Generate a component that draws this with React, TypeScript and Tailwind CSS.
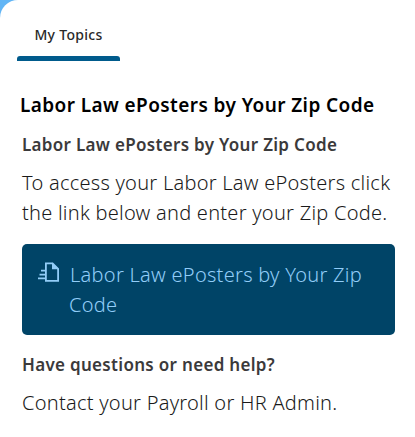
import { ReactNode } from 'react';

const Heading = ({ children }: { children: ReactNode }) => (
    <h3 className="text-[17px] leading-[30px] font-semibold tracking-[0.31px] text-[#3b3a3b] whitespace-nowrap">{children}</h3>
);

const Copy = ({ children }: { children: ReactNode }) => (
    <p className="text-xl leading-[30px] font-light tracking-[0.25px] text-[#1a1a1a] whitespace-nowrap">{children}</p>
);

function PosterIcon() {
    return (
        <svg viewBox="0 0 24 24" className="w-6 h-6 shrink-0" fill="none" stroke="currentColor" strokeWidth="1.8">
            <path d="M7.9 3.4H14.6L20.1 8.9V20.8H7.9Z" />
            <path d="M14 2.5V9.2H20.9Z" fill="currentColor" stroke="none" />
            <path d="M3 10.6h4M1.5 14.7h5.5M0 18.4h7" />
        </svg>
    );
}

export default function App() {
    return (
        <div className="h-[437px] w-[415px] overflow-hidden bg-[#62b5f5]" style={{ fontFamily: '"Noto Sans", "Open Sans", sans-serif' }}>
            <div className="h-full bg-white rounded-tl-[18px]">
                <nav className="pl-[17px]">
                    <button className="flex flex-col items-center w-[103px] h-[61px] pt-[25px] text-sm leading-5 font-medium tracking-[0.3px] text-[#292929]">
                        My Topics
                        <span className="mt-auto h-[5px] w-full shrink-0 rounded-t-[3px] bg-[#005b8c]" />
                    </button>
                </nav>
                <main className="pl-[22px] pr-5 pt-[29px]">
                    <h2 className="-ml-0.5 text-[19px] leading-[30px] font-semibold tracking-[0.41px] text-black whitespace-nowrap">
                        Labor Law ePosters by Your Zip Code
                    </h2>
                    <div className="mt-[10px]">
                        <Heading>Labor Law ePosters by Your Zip Code</Heading>
                    </div>
                    <div className="mt-2">
                        <Copy>To access your Labor Law ePosters click<br />the link below and enter your Zip Code.</Copy>
                    </div>
                    <a href="#" className="mt-4 flex w-[373px] h-[91px] gap-[7px] rounded-[5px] bg-[#004467] pt-4 pl-4 text-[#92cdf8]">
                        <PosterIcon />
                        <span className="indent-px text-xl leading-[30px] font-light tracking-[0.27px] whitespace-nowrap">
                            Labor Law ePosters by Your Zip<br />Code
                        </span>
                    </a>
                    <div className="mt-[15px]">
                        <Heading>Have questions or need help?</Heading>
                    </div>
                    <div className="mt-2">
                        <Copy>Contact your Payroll or HR Admin.</Copy>
                    </div>
                </main>
            </div>
        </div>
    );
}
